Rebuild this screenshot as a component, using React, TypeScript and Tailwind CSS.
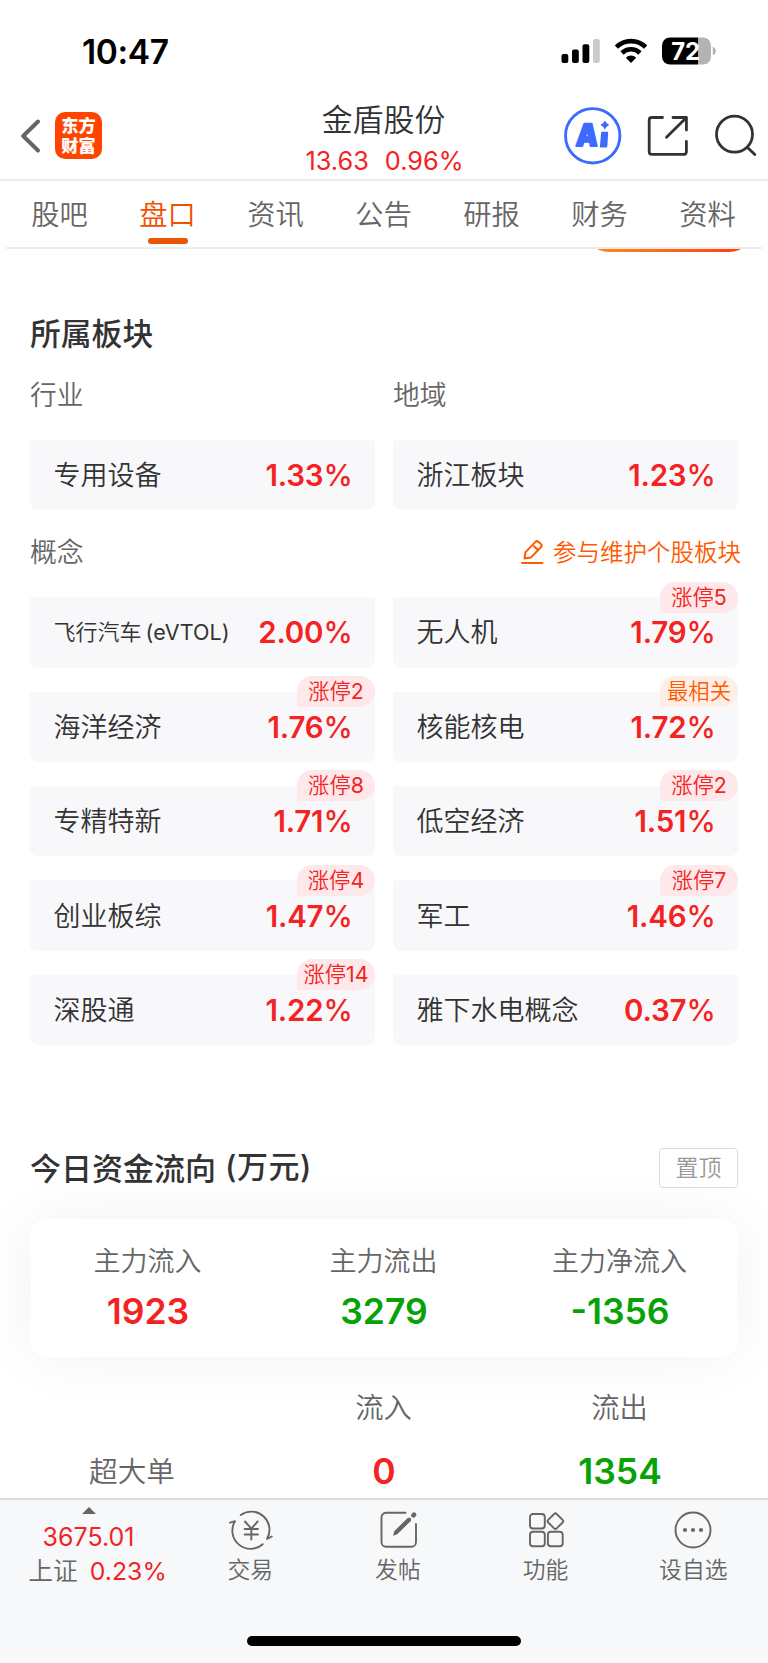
import React from 'react';

type Tag = { text: string; hot?: boolean };
type Board = { name: string; pct: string; tag?: Tag };

const tabs = ['股吧', '盘口', '资讯', '公告', '研报', '财务', '资料'];

const concepts: Board[] = [
  { name: '飞行汽车 (eVTOL)', pct: '2.00' },
  { name: '无人机', pct: '1.79', tag: { text: '涨停5' } },
  { name: '海洋经济', pct: '1.76', tag: { text: '涨停2' } },
  { name: '核能核电', pct: '1.72', tag: { text: '最相关', hot: true } },
  { name: '专精特新', pct: '1.71', tag: { text: '涨停8' } },
  { name: '低空经济', pct: '1.51', tag: { text: '涨停2' } },
  { name: '创业板综', pct: '1.47', tag: { text: '涨停4' } },
  { name: '军工', pct: '1.46', tag: { text: '涨停7' } },
  { name: '深股通', pct: '1.22', tag: { text: '涨停14' } },
  { name: '雅下水电概念', pct: '0.37' },
];

const flows = [
  { label: '主力流入', value: '1923', up: true },
  { label: '主力流出', value: '3279', up: false },
  { label: '主力净流入', value: '-1356', up: false },
];

function StatusBar() {
  return (
    <div className="flex h-[90px] items-start justify-between pl-[82px] pr-[52px] pt-[37px]">
      <div className="h-[30px] text-[33.5px] leading-[30px] font-semibold tracking-[-0.4px] text-black">10:47</div>
      <div className="flex">
        <svg width="156" height="30" viewBox="0 0 156 30">
          <rect x="1.5" y="17" width="6.8" height="9" rx="2" />
          <rect x="12" y="12.5" width="6.8" height="13.5" rx="2" />
          <rect x="22.5" y="7.3" width="6.8" height="18.7" rx="2" />
          <rect x="33" y="2" width="6.8" height="24" rx="2" fill="#cbcbcb" />
          <g fill="none" stroke="#000" strokeWidth="4.6">
            <path d="M56.4 10.2a20.5 20.5 0 0 1 29.2 0" />
            <path d="M62 16a12.8 12.8 0 0 1 18 0" />
          </g>
          <path d="M71 26l-5.2-5.3a7.4 7.4 0 0 1 10.4 0z" />
          <clipPath id="batt"><rect x="102" y="0.5" width="49" height="27" rx="8" /></clipPath>
          <g clipPath="url(#batt)">
            <rect x="102" y="0" width="36" height="28" />
            <rect x="138" y="0" width="14" height="28" fill="#b3b3b3" />
          </g>
          <path d="M152.8 9.8q3 1 3 4.2t-3 4.2z" fill="#b3b3b3" />
          <text x="125.5" y="22.6" textAnchor="middle" fill="#fff" fontSize="24" fontWeight="700" letterSpacing="-0.3">72</text>
        </svg>
      </div>
    </div>
  );
}

function Header() {
  return (
    <div className="flex h-[91px] justify-between border-b-2 border-[#ececec]">
      <div className="flex w-[300px] pl-[20px] pt-[22px]">
        <svg className="mt-[6px]" width="22" height="36" viewBox="0 0 22 36" fill="none" stroke="#666" strokeWidth="4" strokeLinecap="round" strokeLinejoin="round">
          <path d="M18 3.5L3.2 18L18 32.5" />
        </svg>
        <div className="ml-[13px] flex h-[47px] w-[47px] flex-col items-center justify-center rounded-[10px] bg-[#ff4400] pb-[2px] font-['Noto_Sans_CJK_SC',sans-serif] text-[17.2px] leading-[19.5px] font-black text-white">
          <span>东方</span>
          <span>财富</span>
        </div>
      </div>
      <div className="flex flex-1 flex-col items-center pt-[14px]">
        <div className="-ml-[1px] text-[30.9px] leading-[32px] text-[#333]">金盾股份</div>
        <div className="mt-[10px] flex gap-[16px] pl-[1px] text-[25.3px] leading-[30px] text-[#f42323]">
          <span>13.63</span>
          <span>0.96%</span>
        </div>
      </div>
      <div className="flex w-[300px] justify-end">
        <svg width="208" height="89" viewBox="560 90 208 89" fill="none" stroke="#333" strokeWidth="2.6">
          <circle cx="592.7" cy="135.8" r="27.2" stroke="#3b6cff" strokeWidth="2.9" />
          <g fill="#3b6cff" stroke="none">
            <text transform="translate(575.6 145.6) skewX(-4) scale(.9 1)" fontSize="30.5" fontWeight="900" stroke="#3b6cff" strokeWidth="2" strokeLinejoin="round">A</text>
            <path d="M602.200 131.700h5a1 1 0 0 1 1 1.100l-.9 13.600a1.200 1.200 0 0 1-1.200 1.100h-5.200a1 1 0 0 1-1-1.100l1.200-13.600a1.200 1.200 0 0 1 1.100-1.100z" />
            <path d="M604.900 120.500q1.400 3.200 4.400 4.500q-3 1.300-4.400 4.500q-1.400-3.200-4.400-4.500q3-1.300 4.400-4.500z" />
          </g>
          <g strokeLinecap="round" strokeLinejoin="round" strokeWidth="2.8">
            <path d="M662.5 117.5H651.8a2.6 2.6 0 0 0-2.6 2.6V151.8a2.6 2.6 0 0 0 2.6 2.6H683.8a2.6 2.6 0 0 0 2.6-2.6V141.5" />
            <path d="M673 117.5H686.4V130" />
            <path d="M686 118L666.5 137.2" />
            <circle cx="734.5" cy="134.2" r="18" />
            <path d="M747.5 147.5L754.8 154.6" />
          </g>
        </svg>
      </div>
    </div>
  );
}

function Tabs() {
  return (
    <div className="mx-[6px] grid h-[68px] grid-cols-7 border-b-2 border-[#ececec]">
      {tabs.map((t, i) => (
        <div key={t} className={'flex flex-col items-center pt-[18px] text-[28.3px] leading-[32px] ' + (i === 1 ? 'text-[#f05000]' : 'text-[#666]')}>
          <span className="-ml-[1px]">{t}</span>
          {i === 1 && <span className="mt-[7px] h-[6px] w-[40px] rounded-full bg-[#ea5504]" />}
        </div>
      ))}
    </div>
  );
}

function BoardName({ name }: { name: string }) {
  const [cn, latin] = name.split(' ');
  if (!latin) return <span className="pt-[2px] text-[27px] leading-[32px] text-[#333]">{name}</span>;
  return (
    <span className="flex gap-[4px] text-[22px] leading-[32px] text-[#333]">
      {cn}
      <span className="text-[21.500px] tracking-[0.1px]">{latin}</span>
    </span>
  );
}

function BoardCard({ b }: { b: Board }) {
  return (
    <div className="relative flex h-[70.4px] items-center justify-between rounded-t-[2px] rounded-b-[8px] bg-[#f8f8fa] pr-[22.500px] pl-[23.500px]">
      <BoardName name={b.name} />
      <span className="text-[29.5px] leading-[32px] font-semibold tracking-[-0.2px] text-[#f42323]">
        {b.pct}<span className="font-medium">%</span>
      </span>
      {b.tag && (
        <span className={'absolute top-[-15.500px] right-0 flex h-[31px] min-w-[78px] items-center justify-center rounded-[16px] rounded-bl-[1px] px-[6px] text-[21.3px] leading-[31px] whitespace-nowrap ' + (b.tag.hot ? 'bg-[#ffeee5] text-[#ff5a00]' : 'bg-[#fee8e9] text-[#f42323]')}>
          {b.tag.text}
        </span>
      )}
    </div>
  );
}

function Boards() {
  return (
    <section className="h-[881px] px-[30px]">
      <h2 className="pt-[62px] font-['Noto_Sans_CJK_SC',sans-serif] text-[30.8px] leading-[36px] font-medium text-[#333]">所属板块</h2>
      <div className="mt-[30px] grid grid-cols-2 gap-x-[18px] text-[26.8px] leading-[31px] text-[#666]">
        <span>行业</span>
        <span>地域</span>
      </div>
      <div className="mt-[29px] grid grid-cols-2 gap-x-[18px]">
        <BoardCard b={{ name: '专用设备', pct: '1.33' }} />
        <BoardCard b={{ name: '浙江板块', pct: '1.23' }} />
      </div>
      <div className="mt-[27px] mr-[-3px] flex h-[30px] items-center justify-between">
        <span className="text-[26.8px] leading-[30px] text-[#666]">概念</span>
        <span className="flex items-center text-[23.5px] leading-[32px] text-[#ff5a00]">
          <svg className="mr-[9px]" width="24" height="26" viewBox="0 0 24 26" fill="none" stroke="#ff5a00" strokeWidth="2" strokeLinecap="round" strokeLinejoin="round">
            <path d="M2 24H22.500" />
            <path d="M4.500 19.600l.8-6.200L15.200 3.100a2.500 2.500 0 0 1 3.500-.2l2 1.900a2.500 2.500 0 0 1 .2 3.500L11 18.400z" />
            <path d="M14 7.200l3.800 3.600" />
          </svg>
          <span className="pt-[1px]">参与维护个股板块</span>
        </span>
      </div>
      <div className="mt-[29.800px] grid grid-cols-2 gap-x-[18px] gap-y-[24px]">
        {concepts.map((b) => <BoardCard key={b.name} b={b} />)}
      </div>
    </section>
  );
}

function Capital() {
  return (
    <section className="flex h-[365px] flex-col px-[30px] pt-[15px]">
      <div className="flex h-[40px] items-center justify-between">
        <h2 className="flex gap-[9px] pb-[2px] font-['Noto_Sans_CJK_SC',sans-serif] text-[31px] leading-[36px] font-medium text-[#333]">
          <span>今日资金流向</span>
          <span className="font-['Inter','Noto_Sans_CJK_SC',sans-serif] tracking-[0.5px]">(万元)</span>
        </h2>
        <span className="flex h-[40px] w-[79px] items-center justify-center rounded-[4px] border border-[#dcdcdf] text-[23px] leading-[30px] text-[#999]">置顶</span>
      </div>
      <div className="mt-[31px] grid h-[138px] shrink-0 grid-cols-3 rounded-[16px] bg-white pt-[28px] shadow-[0_0_60px_rgba(0,0,0,0.06)]">
        {flows.map((f) => (
          <div key={f.label} className="flex flex-col items-center">
            <span className="-ml-[1px] text-[27px] leading-[30px] text-[#666]">{f.label}</span>
            <span className={'mt-[17px] text-[35.500px] leading-[36px] font-semibold ' + (f.up ? 'text-[#f42323]' : 'text-[#06a206]')}>{f.value}</span>
          </div>
        ))}
      </div>
      <div className="mt-[36px] grid grid-cols-3 text-center text-[28.3px] leading-[30px] text-[#666]">
        <span />
        <span className="-ml-[1px]">流入</span>
        <span className="-ml-[1px]">流出</span>
      </div>
      <div className="mt-[31px] grid grid-cols-3 text-center text-[28.6px] leading-[36px] text-[#666]">
        <span className="pr-[32px]">超大单</span>
        <span className="text-[35.5px] font-semibold text-[#f42323]">0</span>
        <span className="text-[35.5px] font-semibold text-[#06a206]">1354</span>
      </div>
    </section>
  );
}

const icons: Record<string, React.ReactNode> = {
  交易: (
    <>
      <path d="M12.700 5A18.200 18.200 0 0 1 39.100 28.800L43.800 26.500" />
      <path d="M34.700 34.200A18.200 18.200 0 0 1 7 11.200L2 12.700" />
      <path d="M17 11.500l6.300 7.200 6.300-7.200M16.600 19h13.400M16.600 24.500h13.400M23.300 19v10.500" />
    </>
  ),
  发帖: (
    <>
      <path d="M29.500 2.800H10a4.500 4.500 0 0 0-4.500 4.500V32.200a4.500 4.500 0 0 0 4.500 4.500H35.500a4.500 4.500 0 0 0 4.500-4.500V14" />
      <path d="M17 26l1.300-4.800L32 7.700l3 3L21.300 24z" fill="#666" stroke="none" />
      <path d="M19.800 22.700L33.300 9.500" strokeWidth="3.600" />
      <path d="M37.400 5.300l.7-.7" strokeWidth="4.600" />
    </>
  ),
  功能: (
    <>
      <rect x="6" y="4" width="14.800" height="14.500" rx="3" />
      <rect x="6" y="21.800" width="14.800" height="14.500" rx="3" />
      <rect x="23.900" y="21.800" width="14.800" height="14.500" rx="3" />
      <rect x="25.400" y="5.200" width="12" height="12" rx="1.800" transform="rotate(45 31.400 11.200)" />
    </>
  ),
  设自选: (
    <>
      <circle cx="22" cy="20" r="17.500" />
      <g fill="#666" stroke="none">
        <circle cx="14" cy="20" r="2.100" />
        <circle cx="22" cy="20" r="2.100" />
        <circle cx="30" cy="20" r="2.100" />
      </g>
    </>
  ),
};

function BottomBar() {
  return (
    <nav className="flex h-[165px] flex-col border-t-2 border-[#dcdce0] bg-[#f7f8fa]">
      <div className="flex h-[136px]">
        <div className="flex w-[177px] shrink-0 flex-col items-center">
          <svg className="mt-[7px]" width="14" height="7" viewBox="0 0 14 7"><path d="M7 0l7 7H0z" fill="#666" /></svg>
          <span className="mt-[9px] text-[25px] leading-[28px] text-[#f42323]">3675.01</span>
          <span className="mt-[6px] ml-[18px] flex gap-[12px] text-[24.800px] leading-[28px] text-[#666]">
            上证<span className="text-[#f42323]">0.23%</span>
          </span>
        </div>
        {Object.keys(icons).map((k) => (
          <div key={k} className="-ml-[0.3px] flex w-[148px] shrink-0 flex-col items-center pt-[10px]">
            <svg className="-ml-[1px] overflow-visible" width="44" height="40" viewBox="0 0 44 40" fill="none" stroke="#666" strokeWidth="1.900" strokeLinecap="round" strokeLinejoin="round">
              {icons[k]}
            </svg>
            <span className="-ml-[1px] mt-[5px] text-[22.800px] leading-[30px] text-[#666]">{k}</span>
          </div>
        ))}
      </div>
      <div className="ml-[247px] h-[10px] w-[274px] rounded-full bg-black" />
    </nav>
  );
}

export default function App() {
  return (
    <main className="h-[1663px] w-[768px] overflow-hidden bg-white font-['Inter','Noto_Sans_CJK_SC_DemiLight','Noto_Sans_CJK_SC',sans-serif]">
      <StatusBar />
      <Header />
      <Tabs />
      <div className="flex h-[3px] items-end justify-end overflow-hidden pr-[13px]">
        <div className="h-[52px] w-[172px] shrink-0 rounded-full bg-linear-to-r from-[#ff8a1f] to-[#ff3010]" />
      </div>
      <Boards />
      <Capital />
      <BottomBar />
    </main>
  );
}
